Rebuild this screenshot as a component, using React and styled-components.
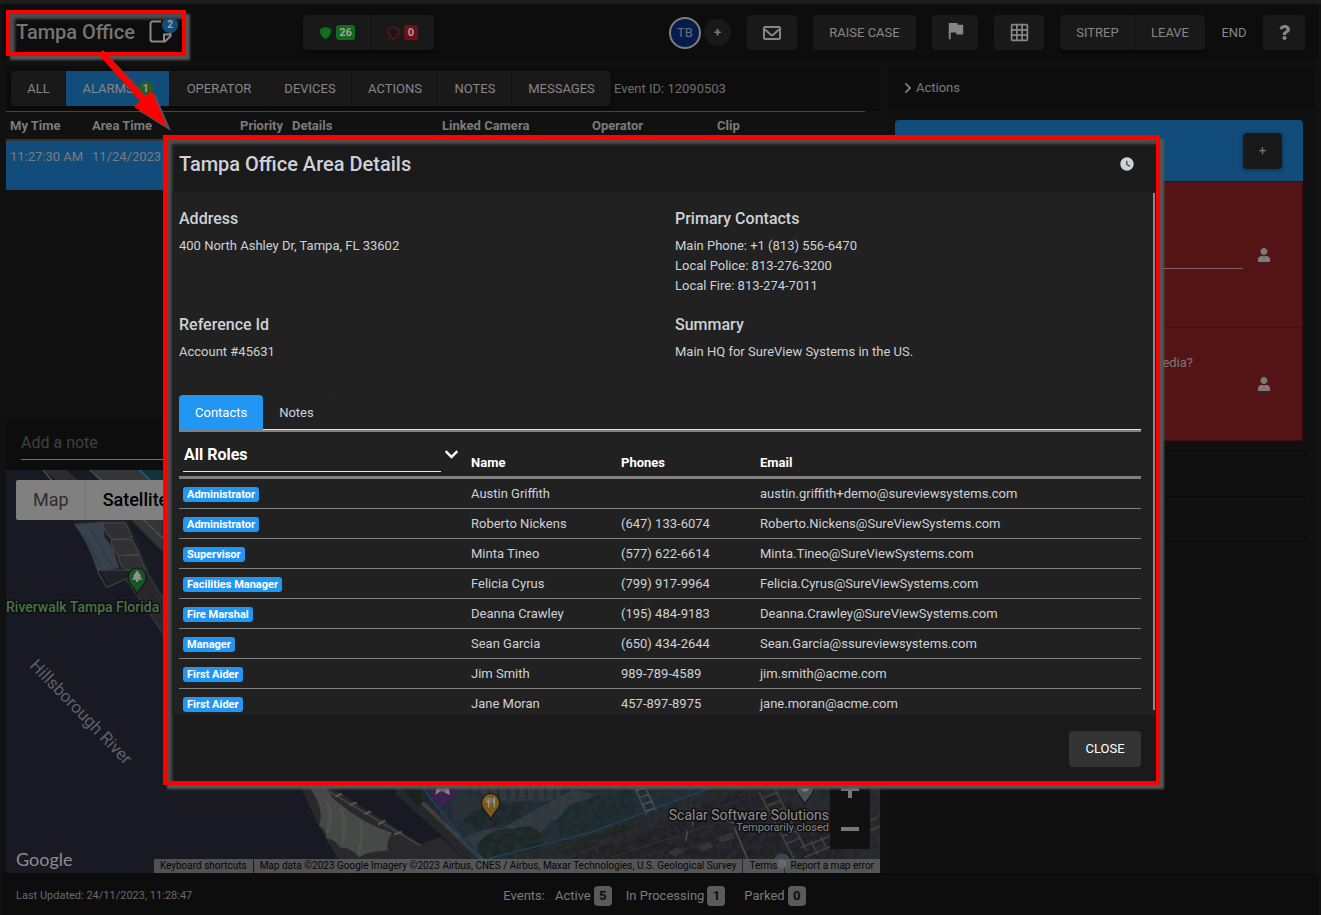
import React from "react";
import styled, { createGlobalStyle, css } from "styled-components";
import { MdFlag, MdGridOn, MdPark, MdRestaurant, MdWatchLater } from "react-icons/md";
import { FaChevronDown, FaChevronRight, FaQuestion, FaUser } from "react-icons/fa";

const GlobalStyle = createGlobalStyle`
  *, *::before, *::after { box-sizing: border-box; }
  body {
    margin: 0;
    background: #111111;
    color: #7b7b7b;
    font-family: Roboto, "Liberation Sans", sans-serif;
    font-size: 13px;
    line-height: 20px;
  }
  button, input, select {
    margin: 0;
    padding: 0;
    border: 0;
    color: inherit;
    font: inherit;
    background: none;
  }
  h1, h2, h3, p { margin: 0; font-weight: 500; }
  table { border-collapse: collapse; border-spacing: 0; }
  svg { display: block; flex: none; }
`;

const Page = styled.div`
  position: relative;
  display: flex;
  flex-direction: column;
  min-height: 100vh;
  padding: 0 2px;
  border-top: 4px solid #1c1c1c;
`;

/* ---------- Top bar ---------- */

const TopBar = styled.header`
  display: flex;
  align-items: center;
  height: 57px;
  padding: 0 14px 0 4px;
  background: #0d0d0d;
`;

const calloutFrame = css`
  border: 4px solid #ff0000;
  box-shadow: 4px 4px 2px #555555, inset 5px 5px 3px #4d4d4d;
`;

const AreaCallout = styled.div`
  ${calloutFrame}
  position: relative;
  display: flex;
  align-items: center;
  justify-content: space-between;
  width: 180px;
  height: 46px;
  padding: 0 5px 2px 6px;
`;

const AreaName = styled.h1`
  font-size: 20px;
  line-height: 24px;
  color: #747474;
`;

const NoteButton = styled.button`
  position: relative;
  width: 28px;
  height: 26px;
  color: #8a8a8a;
`;

const NoteCount = styled.span`
  position: absolute;
  top: -2px;
  right: -1px;
  width: 16px;
  height: 16px;
  border-radius: 8px;
  background: #124c7b;
  color: #a0a0a0;
  font-size: 10px;
  font-weight: 700;
  line-height: 16px;
  text-align: center;
`;

const CalloutArrow = styled.svg`
  position: absolute;
  top: 46px;
  left: 97px;
  z-index: 3;
  pointer-events: none;
`;

const ButtonGroup = styled.div`
  display: flex;
  flex: none;
  border-radius: 4px;
  overflow: hidden;
  box-shadow: 0 2px 3px #080808;
`;

const Button = styled.button`
  display: flex;
  flex: none;
  align-items: center;
  justify-content: center;
  gap: 4px;
  min-width: ${(p) => p.$width}px;
  height: 35px;
  border-radius: ${(p) => (p.$grouped ? 0 : 4)}px;
  box-shadow: ${(p) => (p.$grouped ? "inset -1px 0 #151515" : "none")};
  background: ${(p) => (p.$active ? "#124c7b" : p.$flat ? "#0d0d0d" : "#191919")};
  color: #868686;
  white-space: nowrap;
`;

const ShieldGroup = styled(ButtonGroup)`
  margin-left: 117px;
`;

const CountBadge = styled.span`
  min-width: ${(p) => (p.$wide ? 19 : 14)}px;
  height: 15px;
  border-radius: 3px;
  background: ${(p) => p.$color};
  color: #a3a3a3;
  font-size: 11px;
  font-weight: 700;
  line-height: 15px;
  text-align: center;
`;

const Tools = styled.nav`
  display: flex;
  align-items: center;
  gap: 16px;
  margin-left: auto;
`;

const People = styled.div`
  display: flex;
  align-items: center;
  gap: 3px;
`;

const Avatar = styled.span`
  width: 32px;
  height: 32px;
  border: 2px solid #7f7f7f;
  border-radius: 16px;
  background: #061d4c;
  color: #656e82;
  line-height: 27px;
  text-align: center;
`;

const AddPerson = styled.button`
  width: 27px;
  height: 27px;
  border-radius: 14px;
  background: #191919;
  font-weight: 700;
`;

const ExitTools = styled.div`
  display: flex;
`;

/* ---------- Work area ---------- */

const Work = styled.main`
  display: grid;
  grid-template-columns: minmax(0, 1fr) 426px;
  flex: 1;
  gap: 8px;
  padding: 5px 5px 0 4px;
`;

const EventColumn = styled.section`
  display: flex;
  flex-direction: column;
  min-width: 0;
`;

const FilterBar = styled.div`
  display: flex;
  align-items: center;
  gap: 3px;
  padding: 5px 5px;
  background: #0d0d0d;
`;

const TabCount = styled.span`
  width: 16px;
  height: 16px;
  border-radius: 8px;
  background: #275c2a;
  color: #9a9a9a;
  font-size: 11px;
  font-weight: 700;
  line-height: 16px;
  text-align: center;
`;

const EventId = styled.span`
  color: #6e6e6e;
  white-space: nowrap;
`;

const EventTable = styled.table`
  width: calc(100% - 15px);
  table-layout: fixed;
  border-top: 1px solid #454545;
  text-align: left;

  th {
    height: 28px;
    padding: 2px 4px 0;
    font-weight: 700;
    white-space: nowrap;
  }
  td {
    height: 50px;
    padding: 6px 4px;
    border-top: 2px solid #343434;
    background: #124c7b;
    vertical-align: top;
    white-space: nowrap;
  }
`;

const Col = styled.col`
  width: ${(p) => (p.$width ? `${p.$width}px` : "auto")};
`;

const EventSpace = styled.div`
  height: 229px;
`;

const NoteBar = styled.div`
  padding: 7px 15px 10px;
  background: #0d0d0d;
`;

const NoteInput = styled.input`
  width: 100%;
  height: 34px;
  border-bottom: 1px solid #707070;
  font-size: 16px;
  &::placeholder { color: #404040; opacity: 1; }
`;

/* ---------- Map ---------- */

const MapBox = styled.div`
  position: relative;
  flex: 1;
  min-height: 403px;
  overflow: hidden;
  background: #191923;
`;

const MapArt = styled.svg`
  position: absolute;
  inset: 0;
  width: 100%;
  height: 100%;
`;

const MapTypes = styled.div`
  position: absolute;
  top: 10px;
  left: 10px;
  display: flex;
  border-radius: 2px;
  overflow: hidden;
  background: #808080;
`;

const MapType = styled.button`
  height: 40px;
  padding: 0 17px;
  box-shadow: inset -1px 0 #747474;
  color: ${(p) => (p.$active ? "#000000" : "#2d2d2d")};
  font-size: 18px;
  font-weight: ${(p) => (p.$active ? 500 : 400)};
`;

const ZoomControls = styled.div`
  position: absolute;
  right: 10px;
  bottom: 24px;
  display: flex;
  flex-direction: column;
  width: 40px;
  background: #111111;
`;

const ZoomButton = styled.button`
  display: flex;
  align-items: center;
  justify-content: center;
  height: 40px;
`;

const MapLogo = styled.span`
  position: absolute;
  bottom: 2px;
  left: 10px;
  color: #8d8d8d;
  font-family: Lato, "Liberation Sans", sans-serif;
  font-size: 18px;
  line-height: 24px;
`;

const MapCredits = styled.div`
  position: absolute;
  right: 0;
  bottom: 0;
  display: flex;
  gap: 1px;
  font-size: 10px;
  line-height: 14px;
  color: #050505;
  white-space: nowrap;

  > * {
    padding: 0 6px;
    background: rgba(100, 100, 100, 0.75);
    color: inherit;
    text-decoration: none;
  }
`;

/* ---------- Actions column ---------- */

const ActionColumn = styled.aside`
  background: #101010;
`;

const ActionTitle = styled.h2`
  display: flex;
  align-items: center;
  gap: 2px;
  height: 43px;
  padding: 0 14px;
  background: #0d0d0d;
  font-size: 13px;
  font-weight: 400;
`;

const ActionCards = styled.div`
  display: flex;
  flex-direction: column;
  gap: 10px;
  padding: 11px 8px 0 7px;
`;

const TaskCard = styled.section`
  margin-right: 3px;
  border-radius: 4px;
  overflow: hidden;
`;

const TaskHead = styled.div`
  display: flex;
  align-items: center;
  justify-content: flex-end;
  height: 61px;
  padding: 0 21px;
  background: #124c7b;
`;

const AddTask = styled.button`
  width: 39px;
  height: 36px;
  border-radius: 4px;
  background: #191919;
  box-shadow: 0 1px 4px #0c2f4a;
`;

const Task = styled.div`
  display: flex;
  align-items: center;
  gap: 14px;
  height: ${(p) => (p.$tall ? 147 : 113)}px;
  padding: 0 31px;
  border: 1px solid #3d0f11;
  border-top-width: ${(p) => (p.$tall ? 1 : 0)}px;
  background: #541416;
`;

const TaskInput = styled.input`
  flex: 1;
  height: 28px;
  border-bottom: 1px solid #7c6565;
`;

const TaskQuestion = styled.p`
  flex: 1;
  height: 62px;
  padding-right: 50px;
  font-weight: 400;
  text-align: right;
`;

const EmptyCard = styled.div`
  border: 1px solid #0b0b0b;
  border-radius: 4px;
  > div { height: 44px; }
  > div + div { border-top: 1px solid #0b0b0b; }
`;

/* ---------- Status bar ---------- */

const StatusBar = styled.footer`
  display: grid;
  grid-template-columns: 1fr auto 1fr;
  align-items: center;
  height: 42px;
  padding: 4px 26px 0 14px;
  background: #0d0d0d;
`;

const Updated = styled.span`
  font-size: 11px;
  color: #6a6a6a;
`;

const EventCounts = styled.div`
  display: flex;
  align-items: center;
  gap: 10px;
`;

const EventCount = styled.span`
  display: flex;
  align-items: center;
  gap: 3px;

  & + & { margin-left: 4px; }
  &:last-child { margin-left: 9px; }

  b {
    width: 18px;
    height: 20px;
    border-radius: 4px;
    background: #5a5a5a;
    color: #0d0d0d;
    text-align: center;
  }
`;

/* ---------- Area details dialog ---------- */

const DialogLayer = styled.div`
  position: absolute;
  inset: 131px 0 auto 2px;
  display: flex;
  justify-content: center;
  z-index: 2;
`;

const Dialog = styled.section`
  ${calloutFrame}
  position: relative;
  width: min(997px, calc(100% - 32px));
  background: #1a1a1a;
  color: #cfd1d6;
`;

const DialogHead = styled.header`
  display: flex;
  align-items: center;
  justify-content: space-between;
  height: 53px;
  padding: 0 21px 4px 12px;
`;

const DialogTitle = styled.h2`
  font-size: 20px;
  line-height: 24px;
`;

const IconButton = styled.button`
  display: flex;
`;

const DialogBody = styled.div`
  position: relative;
  height: 523px;
  margin-left: 5px;
  padding: 17px 15px 0 7px;
  overflow: hidden;
  background: #212121;
`;

const ScrollThumb = styled.div`
  position: absolute;
  top: 1px;
  right: 1px;
  width: 2px;
  height: 517px;
  background: #8b8b8b;
`;

const Facts = styled.div`
  display: grid;
  grid-template-columns: 1fr 1fr;
  grid-auto-rows: 106px;
  column-gap: 30px;
`;

const FactTitle = styled.h3`
  margin-bottom: 7px;
  font-size: 16px;
  line-height: 20px;
`;

const FactLine = styled.p`
  font-weight: 400;
  line-height: 20px;
`;

const Tabs = styled.div`
  display: flex;
  height: 37px;
  margin-top: -26px;
  border-bottom: 2px solid #808080;
`;

const Tab = styled.button`
  padding: 0 16px;
  border-radius: 4px 4px 0 0;
  background: ${(p) => (p.$active ? "#2196f3" : "transparent")};
  color: ${(p) => (p.$active ? "#ffffff" : "#cfd1d6")};
  box-shadow: ${(p) => (p.$active ? "none" : "0 1px #e4e4e4")};
  box-shadow: ${(p) => (p.$active ? "none" : "inset 0 -1px #e4e4e4")};
`;

const TabRule = styled.div`
  flex: 1;
  border-bottom: 1px solid #e4e4e4;
`;

const ContactTable = styled.table`
  width: 100%;
  table-layout: fixed;
  border-collapse: separate;
  text-align: left;

  th {
    height: 47px;
    padding: 0 4px 3px;
    border-bottom: 3px solid #808080;
    color: #ffffff;
    font-weight: 700;
    vertical-align: bottom;
  }
  td {
    height: 30px;
    padding: 0 4px;
    border-bottom: 1px solid #808080;
    white-space: nowrap;
  }
`;

const RoleFilter = styled.label`
  display: flex;
  align-items: center;
  gap: 3px;
  padding-bottom: 1px;
`;

const RoleSelect = styled.select`
  appearance: none;
  width: 258px;
  height: 35px;
  padding: 1px 1px 0;
  border-bottom: 1px solid #e4e4e4;
  border-radius: 0;
  font-size: 16px;
  font-weight: 700;
`;

const Role = styled.span`
  display: inline-block;
  height: 15px;
  padding: 0 4px;
  border-radius: 3px;
  background: #2196f3;
  color: #ffffff;
  font-size: 11px;
  font-weight: 700;
  line-height: 15px;
  vertical-align: middle;
`;

const DialogFoot = styled.footer`
  display: flex;
  justify-content: flex-end;
  height: 66px;
  padding: 16px 15px 0;
`;

const CloseButton = styled.button`
  width: 72px;
  height: 36px;
  border-radius: 4px;
  background: #333333;
  color: #ffffff;
`;

const filters = [
  ["ALL", 55],
  ["ALARMS", 104],
  ["OPERATOR", 98],
  ["DEVICES", 84],
  ["ACTIONS", 86],
  ["NOTES", 74],
  ["MESSAGES", 99],
];
const eventColumns = [
  ["My Time", 82],
  ["Area Time", 148],
  ["Priority", 52],
  ["Details", 150],
  ["Linked Camera", 150],
  ["Operator", 125],
  ["Clip", 0],
];
const contacts = [
  ["Administrator", "Austin Griffith", "", "austin.griffith+demo@sureviewsystems.com"],
  ["Administrator", "Roberto Nickens", "(647) 133-6074", "Roberto.Nickens@SureViewSystems.com"],
  ["Supervisor", "Minta Tineo", "(577) 622-6614", "Minta.Tineo@SureViewSystems.com"],
  ["Facilities Manager", "Felicia Cyrus", "(799) 917-9964", "Felicia.Cyrus@SureViewSystems.com"],
  ["Fire Marshal", "Deanna Crawley", "(195) 484-9183", "Deanna.Crawley@SureViewSystems.com"],
  ["Manager", "Sean Garcia", "(650) 434-2644", "Sean.Garcia@ssureviewsystems.com"],
  ["First Aider", "Jim Smith", "989-789-4589", "jim.smith@acme.com"],
  ["First Aider", "Jane Moran", "457-897-8975", "jane.moran@acme.com"],
];
const facts = [
  ["Address", ["400 North Ashley Dr, Tampa, FL 33602"]],
  ["Primary Contacts", ["Main Phone: +1 (813) 556-6470", "Local Police: 813-276-3200", "Local Fire: 813-274-7011"]],
  ["Reference Id", ["Account #45631"]],
  ["Summary", ["Main HQ for SureView Systems in the US."]],
];

function Shield({ filled }) {
  return (
    <svg width="13" height="14" viewBox="-10 -10 532 532" aria-hidden="true">
      <path
        d="M256 8 460 88c18 8 30 25 30 48-2 110-45 270-210 355-15 8-33 8-48 0C67 406 24 246 22 136c0-23 12-40 30-48z"
        fill={filled ? "#136f1e" : "none"}
        stroke={filled ? "#136f1e" : "#741417"}
        strokeWidth={filled ? 8 : 45}
      />
    </svg>
  );
}

function NoteIcon() {
  return (
    <svg width="23" height="23" viewBox="0 0 23 23" fill="none" stroke="currentColor" strokeWidth="2" aria-hidden="true">
      <path d="M12 1.5H3.5a2 2 0 0 0-2 2v16a2 2 0 0 0 2 2H16l5.500-5.500V10" />
      <path d="M21.500 14.500h-6.500v7" />
    </svg>
  );
}

function MailIcon() {
  return (
    <svg width="18" height="14" viewBox="0 0 18 14" fill="none" stroke="currentColor" strokeWidth="2" aria-hidden="true">
      <rect x="1" y="1" width="16" height="12" rx="1" />
      <path d="M2 3.500 7.500 8.500q1.500 1.200 3 0L16 3.500" />
    </svg>
  );
}

function Pin({ x, y, color, children }) {
  return (
    <g transform={`translate(${x} ${y})`}>
      <path d="M0 17C-2 10-9 8-9 0a9 9 0 0 1 18 0C9 8 2 10 0 17z" fill={color} stroke="#111" strokeWidth="1" />
      {children}
    </g>
  );
}

function TentWest() {
  return (
    <g transform="translate(-2 -2) scale(.3333)">
      <path d="M115 0h65l45 40-55 10z" fill="#2c2c2f" />
      <path d="M260 0h140l75 70v180L390 165z" fill="#343536" />
      <path d="M252 0 500 232M118 6l32 40" stroke="#4a4b4e" strokeWidth="5" />
      <path d="M400 0h95v90z" fill="#14303b" stroke="#185b88" strokeWidth="5" />
      <path d="M205 155h165l65 150-120 50z" fill="#202027" />
      <path d="M210 168 302 160 300 205 326 240 345 300 280 310 262 260 240 212z" fill="#38424c" />
      <path d="M240 200 290 300M260 180l60 110" stroke="#333c47" strokeWidth="8" />
      <path d="M296 164h68l20 44-60 6q-24-20-28-50z" fill="#302f32" stroke="#46474b" strokeWidth="3" />
      <path d="M322 214h62l22 44-62 5q-24-20-22-49z" fill="#313033" stroke="#46474b" strokeWidth="3" />
      <path d="M342 262h64l20 46-62-4q-20-14-22-42z" fill="#302f32" stroke="#46474b" strokeWidth="3" />
      <path d="M280 310 308 358 365 333M284 306h146" fill="none" stroke="#3c3e44" strokeWidth="4" />
      <path d="M365 333 425 305 500 430v100z" fill="#28282c" stroke="#36363b" strokeWidth="4" />
    </g>
  );
}

function SouthShore() {
  return (
    <g transform="translate(274 312) scale(.3333)">
      <path d="M345 0H1900V300H620L490 165 345 35z" fill="#25282a" />
      <path d="M55 0h75L420 185l60-22 140 130H210L120 140z" fill="#29292c" />
      <path d="M130 18 420 190" stroke="#434346" strokeWidth="5" />
      <path d="m165 42 20-8m22 34 22-8m22 36 20-10m22 40 22-12m26 42 22-8" stroke="#575759" strokeWidth="6" />
      <path d="M75 0 135 10Q150 45 175 62 250 125 335 152 316 178 322 205 275 204 235 224 212 194 180 196 165 170 138 168 140 142 116 130 136 70 75 0z" fill="#474946" />
      <path d="M140 60Q160 90 140 150M180 75Q200 110 185 185M240 115Q250 150 235 215" fill="none" stroke="#50524f" strokeWidth="8" />
      <path d="M350 0h80l15 60-35 10z" fill="#1a221b" />
      <path d="M415 0 602 235 930 145 1300 20V0z" fill="#202d35" />
      <path d="M500 10 520 110 590 150 650 75 560 20z" fill="#253139" />
      <path d="M540 10h300v45H650z" fill="#303a41" />
      <path d="M570 14v25m28-25v30m28-30v32m28-32v34m28-34v34m28-34v34m28-34v34m28-34v34m28-34v34m28-34v34" stroke="#232c32" strokeWidth="8" />
      <path d="M550 165q60-30 120-30l80-45 130-70 60 15-70 70-60 10-40 50-120 0-60 40z" fill="#333c42" />
      <path d="M545 115q65-55 95-45l95-10-12 45-130 42z" fill="#19272b" />
      <path d="M590 185Q640 130 700 140 760 115 785 160L790 195 640 228 600 225z" fill="#1a2823" />
      <path d="M830 110 870 65 1040 15 1080 60 1060 105 840 165z" fill="#1a2b2f" />
      <path d="M820 200 1050 118 1080 130 870 215z" fill="#1e261f" />
      <path d="M860 232 1370 27h80l190 85 60 120z" fill="#212024" />
      <path d="M990 225 1500 60" stroke="#372f22" strokeWidth="4" />
      <path d="M900 210 1420 40M1130 225l430-130" stroke="#2b2b2f" strokeWidth="4" />
      <path d="M425 60 608 235" stroke="#41403e" strokeWidth="12" />
      <path d="M412 0 600 235l330-85 390-145" fill="none" stroke="#154566" strokeWidth="5" />
      <path d="m1060 10 38 86m-10-94 38 84M1064 26l28-10m-16 30 30-10m-20 30 30-10m-20 30 30-10" stroke="#4f5558" strokeWidth="5" />
      <path d="m1435 30 105 200m-58-210 95 185M1440 50l45-18m-32 40 45-18m-33 40 45-18m-33 40 45-18m-30 42 45-18m-33 40 45-18m-33 40 45-18" stroke="#434447" strokeWidth="5" />
      <path d="m1570 225 230-95m-240 65 230-90m-200 70 20 42m10-55 20 42m10-55 20 42m10-55 20 42m10-55 20 42m10-55 20 42" stroke="#434447" strokeWidth="5" />
      <path d="m1360 135 40 95M1320 105l40 18M1240 100l-5 30m-20 45 5-30" fill="none" stroke="#4d4e50" strokeWidth="5" />
      <path d="m1160 210 30-15 20 10-25 18zm150-45 42-15 10 18-45 14zm-60 28 35-15 15 15-35 14z" fill="#353538" />
      <path d="M440 0h90q0 45-46 74-34-25-44-74z" fill="#431b54" />
      <path d="m464 38 6-28h32l7 28-27-12z" fill="#8b8b8b" />
    </g>
  );
}

function AreaMap() {
  return (
    <MapBox>
      <MapArt viewBox="0 0 874 403" preserveAspectRatio="xMinYMax slice" aria-label="Satellite map of the Tampa riverfront">
        <defs>
          <filter id="grain" x="0" y="0" width="100%" height="100%">
            <feTurbulence type="fractalNoise" baseFrequency="0.150" numOctaves="3" />
            <feColorMatrix values="0 0 0 0 .03  0 0 0 0 .03  0 0 0 0 .04  1.4 0 0 0 -.5" result="noise" />
            <feComposite in="noise" in2="SourceGraphic" operator="in" />
          </filter>
        </defs>
        <rect width="874" height="403" fill="#191923" />
        <TentWest />
        <SouthShore />
        <path d="M400 310h474v93H478z" filter="url(#grain)" />
        <Pin x={131} y={107} color="#1a5527">
          <MdPark x={-7} y={-8} size={14} color="#909090" />
        </Pin>
        <Pin x={484} y={332} color="#7c5a1c">
          <MdRestaurant x={-6} y={-6} size={12} color="#919191" />
        </Pin>
        <Pin x={798} y={317} color="#4a5358">
          <circle r="4" fill="#858585" />
        </Pin>
        <circle cx="775" cy="391" r="8" fill="#384850" />
        <circle cx="775" cy="393" r="4" fill="#727678" />
        <g fontWeight="500" stroke="#101010" strokeWidth="3" strokeLinejoin="round" paintOrder="stroke">
          <text x="0" y="142" fontSize="14" fill="#49724b">Riverwalk Tampa Florida</text>
          <text x="822" y="350" fontSize="14" fontWeight="400" textAnchor="end" fill="#909090">Scalar Software Solutions</text>
          <text x="822" y="361" fontSize="11" fontWeight="400" textAnchor="end" fill="#858585">Temporarily closed</text>
        </g>
        <text transform="translate(23 196) rotate(46)" fontSize="17" fill="#59616b">Hillsborough River</text>
      </MapArt>
      <MapTypes>
        <MapType type="button">Map</MapType>
        <MapType type="button" $active>Satellite</MapType>
      </MapTypes>
      <ZoomControls>
        <ZoomButton type="button" aria-label="Zoom in">
          <svg width="18" height="18"><path d="M0 9h18M9 0v18" stroke="#777" strokeWidth="4" /></svg>
        </ZoomButton>
        <ZoomButton type="button" aria-label="Zoom out">
          <svg width="18" height="4"><path d="M0 2h18" stroke="#777" strokeWidth="4" /></svg>
        </ZoomButton>
      </ZoomControls>
      <MapLogo>Google</MapLogo>
      <MapCredits>
        <button type="button">Keyboard shortcuts</button>
        <span>Map data ©2023 Google Imagery ©2023 Airbus, CNES / Airbus, Maxar Technologies, U.S. Geological Survey</span>
        <a href="#terms">Terms</a>
        <a href="#report">Report a map error</a>
      </MapCredits>
    </MapBox>
  );
}

function AreaDetails() {
  return (
    <DialogLayer>
      <Dialog role="dialog" aria-labelledby="area-title">
        <DialogHead>
          <DialogTitle id="area-title">Tampa Office Area Details</DialogTitle>
          <IconButton type="button" aria-label="Opening hours"><MdWatchLater size={16} /></IconButton>
        </DialogHead>
        <DialogBody>
          <ScrollThumb />
          <Facts>
            {facts.map(([title, lines]) => (
              <div key={title}>
                <FactTitle>{title}</FactTitle>
                {lines.map((line) => <FactLine key={line}>{line}</FactLine>)}
              </div>
            ))}
          </Facts>
          <Tabs>
            <Tab type="button" $active>Contacts</Tab>
            <Tab type="button">Notes</Tab>
            <TabRule />
          </Tabs>
          <ContactTable>
            <colgroup>
              <Col $width={288} /><Col $width={150} /><Col $width={139} /><Col />
            </colgroup>
            <thead>
              <tr>
                <th>
                  <RoleFilter>
                    <RoleSelect aria-label="Role" defaultValue="All Roles">
                      <option>All Roles</option>
                    </RoleSelect>
                    <FaChevronDown size={15} />
                  </RoleFilter>
                </th>
                <th>Name</th>
                <th>Phones</th>
                <th>Email</th>
              </tr>
            </thead>
            <tbody>
              {contacts.map(([role, name, phone, email]) => (
                <tr key={email}>
                  <td><Role>{role}</Role></td>
                  <td>{name}</td>
                  <td>{phone}</td>
                  <td>{email}</td>
                </tr>
              ))}
            </tbody>
          </ContactTable>
        </DialogBody>
        <DialogFoot>
          <CloseButton type="button">CLOSE</CloseButton>
        </DialogFoot>
      </Dialog>
    </DialogLayer>
  );
}

export default function App() {
  return (
    <>
      <GlobalStyle />
      <Page>
        <TopBar>
          <AreaCallout>
            <AreaName>Tampa Office</AreaName>
            <NoteButton type="button" aria-label="Area notes">
              <NoteIcon />
              <NoteCount>2</NoteCount>
            </NoteButton>
          </AreaCallout>
          <ShieldGroup>
            <Button type="button" $grouped $width={68}><Shield filled /><CountBadge $wide $color="#126a1d">26</CountBadge></Button>
            <Button type="button" $grouped $width={63}><Shield /><CountBadge $color="#6f1013">0</CountBadge></Button>
          </ShieldGroup>
          <Tools>
            <People>
              <Avatar>TB</Avatar>
              <AddPerson type="button">+</AddPerson>
            </People>
            <Button type="button" $width={50} aria-label="Messages"><MailIcon /></Button>
            <Button type="button" $width={103}>RAISE CASE</Button>
            <Button type="button" $width={46} aria-label="Flag"><MdFlag size={23} viewBox="0 2 24 24" /></Button>
            <Button type="button" $width={50} aria-label="Grid"><MdGridOn size={21} /></Button>
            <ExitTools>
              <ButtonGroup>
                <Button type="button" $grouped $width={75}>SITREP</Button>
                <Button type="button" $grouped $width={70}>LEAVE</Button>
              </ButtonGroup>
              <Button type="button" $flat $width={58}>END</Button>
              <Button type="button" $width={42} aria-label="Help"><FaQuestion size={15} /></Button>
            </ExitTools>
          </Tools>
        </TopBar>

        <Work>
          <EventColumn>
            <FilterBar>
              <ButtonGroup>
                {filters.map(([name, width]) => (
                  <Button key={name} type="button" $grouped $width={width} $active={name === "ALARMS"}>
                    {name}
                    {name === "ALARMS" && <TabCount>1</TabCount>}
                  </Button>
                ))}
              </ButtonGroup>
              <EventId>Event ID: 12090503</EventId>
            </FilterBar>
            <EventTable>
              <colgroup>
                {eventColumns.map(([name, width]) => <Col key={name} $width={width} />)}
              </colgroup>
              <thead>
                <tr>{eventColumns.map(([name]) => <th key={name}>{name}</th>)}</tr>
              </thead>
              <tbody>
                <tr>
                  <td>11:27:30 AM</td>
                  <td>11/24/2023</td>
                  <td colSpan={5} />
                </tr>
              </tbody>
            </EventTable>
            <EventSpace />
            <NoteBar>
              <NoteInput aria-label="Note" placeholder="Add a note" />
            </NoteBar>
            <AreaMap />
          </EventColumn>

          <ActionColumn>
            <ActionTitle><FaChevronRight size={12} />Actions</ActionTitle>
            <ActionCards>
              <TaskCard>
                <TaskHead><AddTask type="button">+</AddTask></TaskHead>
                <Task $tall>
                  <TaskInput aria-label="Response" />
                  <FaUser size={14} />
                </Task>
                <Task>
                  <TaskQuestion>media?</TaskQuestion>
                  <FaUser size={14} />
                </Task>
              </TaskCard>
              <EmptyCard><div /><div /></EmptyCard>
            </ActionCards>
          </ActionColumn>
        </Work>

        <StatusBar>
          <Updated>Last Updated: 24/11/2023, 11:28:47</Updated>
          <EventCounts>
            <span>Events:</span>
            <EventCount>Active <b>5</b></EventCount>
            <EventCount>In Processing <b>1</b></EventCount>
            <EventCount>Parked <b>0</b></EventCount>
          </EventCounts>
        </StatusBar>

        <CalloutArrow width="80" height="90" viewBox="0 0 80 90" aria-hidden="true">
          <path d="M9 3 51 48 58 44 74 81 42 61 46 54 5 7z" fill="#555" />
          <path d="M6 0 48 46 55 41 70 77 37 57 43 51 1 4z" fill="#ff0000" />
        </CalloutArrow>
        <AreaDetails />
      </Page>
    </>
  );
}
